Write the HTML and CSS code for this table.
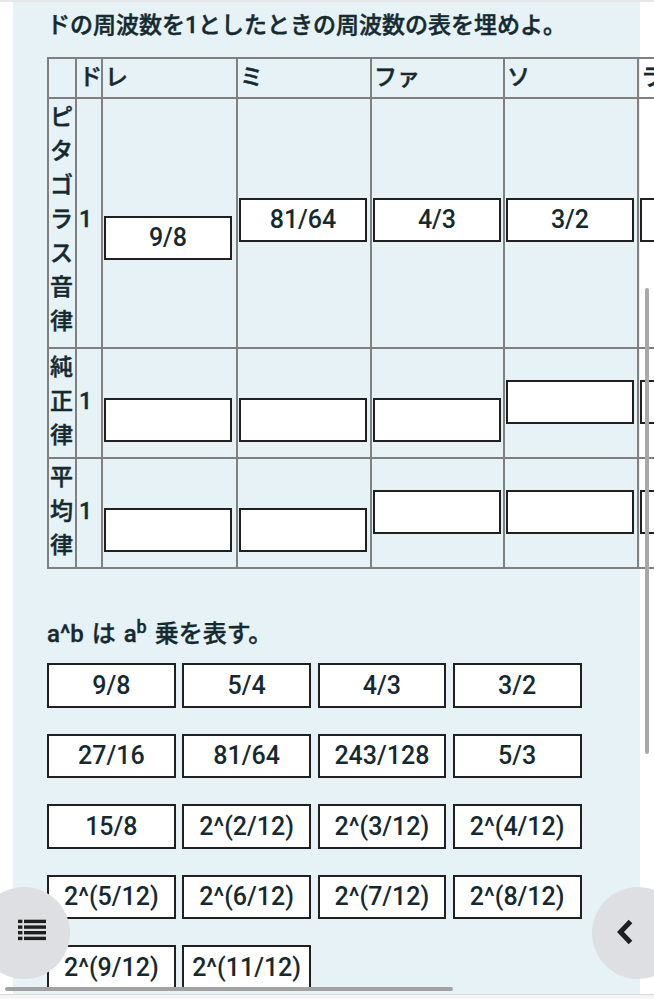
FILE: index.html
```html
<!DOCTYPE html>
<html lang="ja">
<head>
<meta charset="utf-8">
<title>周波数の表</title>
<link rel="stylesheet" href="styles.css">
</head>
<body>
<div class="screen">
  <main class="panel">
    <h1 class="title">ドの周波数を1としたときの周波数の表を埋めよ。</h1>
    <table class="grid">
      <thead>
        <tr>
          <th class="w-label"></th>
          <th class="w-do">ド</th>
          <th class="w-re">レ</th>
          <th class="w-mi">ミ</th>
          <th class="w-fa">ファ</th>
          <th class="w-so">ソ</th>
          <th class="w-la">ラ</th>
        </tr>
      </thead>
      <tbody>
        <tr class="row-long">
          <th class="label">ピタゴラス音律</th>
          <td class="one">1</td>
          <td><div class="slot low">9/8</div></td>
          <td><div class="slot">81/64</div></td>
          <td><div class="slot">4/3</div></td>
          <td><div class="slot">3/2</div></td>
          <td><div class="slot"></div></td>
        </tr>
        <tr>
          <th class="label">純正律</th>
          <td class="one">1</td>
          <td><div class="slot low"></div></td>
          <td><div class="slot low"></div></td>
          <td><div class="slot low"></div></td>
          <td><div class="slot"></div></td>
          <td><div class="slot"></div></td>
        </tr>
        <tr>
          <th class="label">平均律</th>
          <td class="one">1</td>
          <td><div class="slot low"></div></td>
          <td><div class="slot low"></div></td>
          <td><div class="slot"></div></td>
          <td><div class="slot"></div></td>
          <td><div class="slot"></div></td>
        </tr>
      </tbody>
    </table>
    <p class="note">a^b は a<sup class="exp">b</sup> 乗を表す。</p>
    <div class="choices">
      <div class="chip">9/8</div>
      <div class="chip">5/4</div>
      <div class="chip">4/3</div>
      <div class="chip">3/2</div>
      <div class="chip">27/16</div>
      <div class="chip">81/64</div>
      <div class="chip">243/128</div>
      <div class="chip">5/3</div>
      <div class="chip">15/8</div>
      <div class="chip">2^(2/12)</div>
      <div class="chip">2^(3/12)</div>
      <div class="chip">2^(4/12)</div>
      <div class="chip">2^(5/12)</div>
      <div class="chip">2^(6/12)</div>
      <div class="chip">2^(7/12)</div>
      <div class="chip">2^(8/12)</div>
      <div class="chip">2^(9/12)</div>
      <div class="chip">2^(11/12)</div>
    </div>
  </main>

  <div class="scroll-v"></div>
  <div class="scroll-h"></div>

  <button class="fab fab-left" aria-label="目次">
    <svg class="icon-list" width="28" height="22" viewBox="0 0 28 22">
      <rect x="0" y="0.7" width="4.4" height="3.4"/>
      <rect x="6" y="0.7" width="22" height="3.4"/>
      <rect x="0" y="6.4" width="4.4" height="3.4"/>
      <rect x="6" y="6.4" width="22" height="3.4"/>
      <rect x="0" y="12" width="4.4" height="3.4"/>
      <rect x="6" y="12" width="22" height="3.4"/>
      <rect x="0" y="17.7" width="4.4" height="3.4"/>
      <rect x="6" y="17.7" width="22" height="3.4"/>
    </svg>
  </button>
  <button class="fab fab-right" aria-label="戻る">
    <svg class="icon-chev" width="26" height="32" viewBox="0 0 26 32">
      <path d="M18.5 5.5 L8.5 16 L18.5 26.5"/>
    </svg>
  </button>
  <div class="bottom-edge"></div>
</div>
</body>
</html>
```

FILE: styles.css
```css
html, body {
  margin: 0;
  padding: 0;
  background: #ffffff;
}

.screen {
  position: relative;
  width: 654px;
  height: 999px;
  overflow: hidden;
  box-sizing: border-box;
  border-top: 2px solid #e6e7e9;
  background: #ffffff;
  font-family: Roboto, "Noto Sans CJK JP", sans-serif;
  font-weight: 500;
  color: #152a30;
}

.panel {
  box-sizing: border-box;
  margin-left: 13px;
  width: 627px;
  min-height: 1100px;
  padding: 7px 0 0 34px;
  background: #e6f2f5;
}

.title {
  margin: 0 0 14px;
  font-size: 23px;
  line-height: 34px;
  font-weight: 500;
  white-space: nowrap;
  -webkit-text-stroke: 0.45px #152a30;
}

.grid {
  border-collapse: separate;
  border-spacing: 0;
  table-layout: fixed;
  width: 726px;
  border-left: 2px solid #808080;
  border-top: 2px solid #808080;
  font-size: 23px;
  line-height: 34px;
}

.grid th,
.grid td {
  box-sizing: border-box;
  border-right: 2px solid #808080;
  border-bottom: 2px solid #808080;
  padding: 2px 1px 4px;
  vertical-align: middle;
  text-align: left;
  font-weight: 500;
}

.grid thead th {
  padding: 2px 2px;
  -webkit-text-stroke: 0.45px #152a30;
}

.w-label { width: 28px; }
.w-do { width: 26px; }
.w-re { width: 135px; }
.w-mi { width: 134px; }
.w-fa { width: 133px; }
.w-so { width: 134px; }
.w-la { width: 134px; }

.grid .label {
  vertical-align: top;
  word-break: break-all;
  padding-left: 1px;
  padding-right: 0;
  -webkit-text-stroke: 0.45px #152a30;
}

.grid .one {
  padding-left: 2px;
  -webkit-text-stroke: 0.3px #152a30;
}

.grid .row-long th,
.grid .row-long td {
  padding-bottom: 8px;
}

.slot {
  box-sizing: border-box;
  width: 128px;
  height: 44px;
  border: 2px solid #202020;
  background: #ffffff;
  text-align: center;
  line-height: 40px;
  font-size: 25px;
}

.slot.low {
  margin-top: 36px;
}

.note {
  margin: 48px 0 12px;
  font-size: 24px;
  line-height: 34px;
  font-weight: 500;
  word-spacing: 2px;
  -webkit-text-stroke: 0.35px #152a30;
}

.caret {
  letter-spacing: 2px;
}

.exp {
  font-size: 18px;
  line-height: 0;
  vertical-align: 9px;
}

.choices {
  display: flex;
  flex-wrap: wrap;
  gap: 26px 6.6px;
  width: 560px;
}

.chip {
  box-sizing: border-box;
  width: 128.7px;
  height: 44.5px;
  border: 2px solid #202020;
  background: #ffffff;
  display: flex;
  align-items: center;
  justify-content: center;
  font-size: 25px;
  font-weight: 500;
}

.scroll-v {
  position: absolute;
  left: 645px;
  top: 286px;
  width: 3.5px;
  height: 466px;
  border-radius: 2px;
  background: #a8a8a8;
}

.scroll-h {
  position: absolute;
  left: 5px;
  top: 985px;
  width: 448px;
  height: 3.5px;
  border-radius: 2px;
  background: #a2a2a2;
}

.fab {
  position: absolute;
  top: 885px;
  width: 92px;
  height: 92px;
  border: none;
  border-radius: 50%;
  background: #dddfe3;
  padding: 0;
  margin: 0;
}

.fab-left {
  left: -22px;
}

.fab-right {
  left: 592px;
}

.icon-list {
  position: absolute;
  left: 40px;
  top: 32px;
  fill: #1e1e1e;
}

.icon-chev {
  position: absolute;
  left: 20px;
  top: 29px;
  fill: none;
  stroke: #1e1e1e;
  stroke-width: 5;
  stroke-linejoin: miter;
  stroke-linecap: butt;
}

.bottom-edge {
  position: absolute;
  left: 0;
  top: 992px;
  width: 654px;
  height: 7px;
  box-sizing: border-box;
  border-top: 1px solid #d8d8d8;
  background: #f6f6f6;
}
```
